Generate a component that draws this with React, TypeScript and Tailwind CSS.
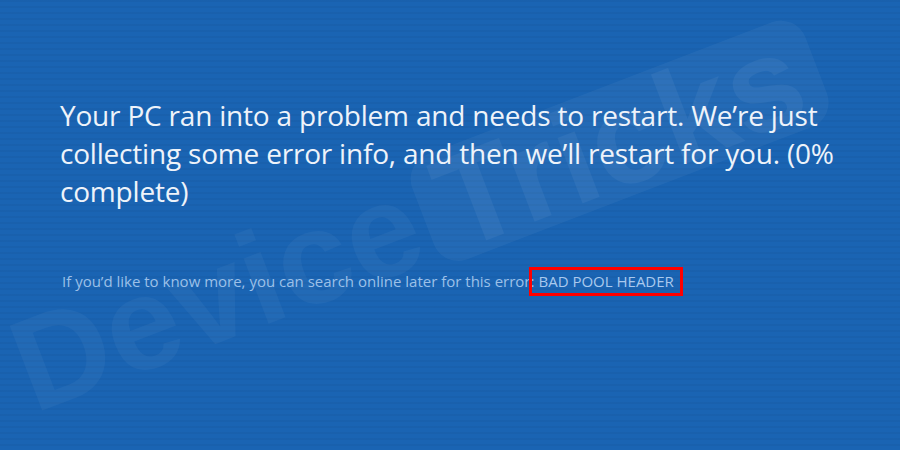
export default function App() {
  return (
    <div className="relative h-[450px] w-[900px] overflow-hidden bg-[#1a64b3] font-['Open_Sans','Noto_Sans',sans-serif]">
      {/* scan lines */}
      <div className="absolute inset-0 bg-[repeating-linear-gradient(180deg,rgba(0,0,0,0.035)_0px,rgba(0,0,0,0.035)_2px,transparent_2px,transparent_6px)]" />

      {/* watermark */}
      <div className="absolute left-[38px] top-[312px] flex origin-bottom-left -rotate-[21deg] items-end whitespace-nowrap font-['Liberation_Sans',sans-serif] text-[132px] font-bold leading-[112px] text-white/[0.04]">
        <span>Device</span>
        <span className="ml-2 rounded-[26px] bg-white/[0.045] px-5 text-white/[0.05]">Tricks</span>
      </div>

      <div className="relative flex flex-col pl-[60px] pt-[96px]">
        <p className="text-[28px] leading-[38px] tracking-[-0.2px] text-[#eef3fa]">
          Your PC ran into a problem and needs to restart. We’re just
          <br />
          collecting some error info, and then we’ll restart for you. (0%
          <br />
          complete)
        </p>

        <div className="mt-[57px] flex items-center text-[15px] text-[#9cc0e8]">
          <span className="ml-[2px]">If you’d like to know more, you can search online later for this error:</span>
          <span className="-ml-[5px] border-[3px] border-[#ff0000] px-[6px] py-0 text-[#a9c9ee]">BAD POOL HEADER</span>
        </div>
      </div>
    </div>
  )
}
